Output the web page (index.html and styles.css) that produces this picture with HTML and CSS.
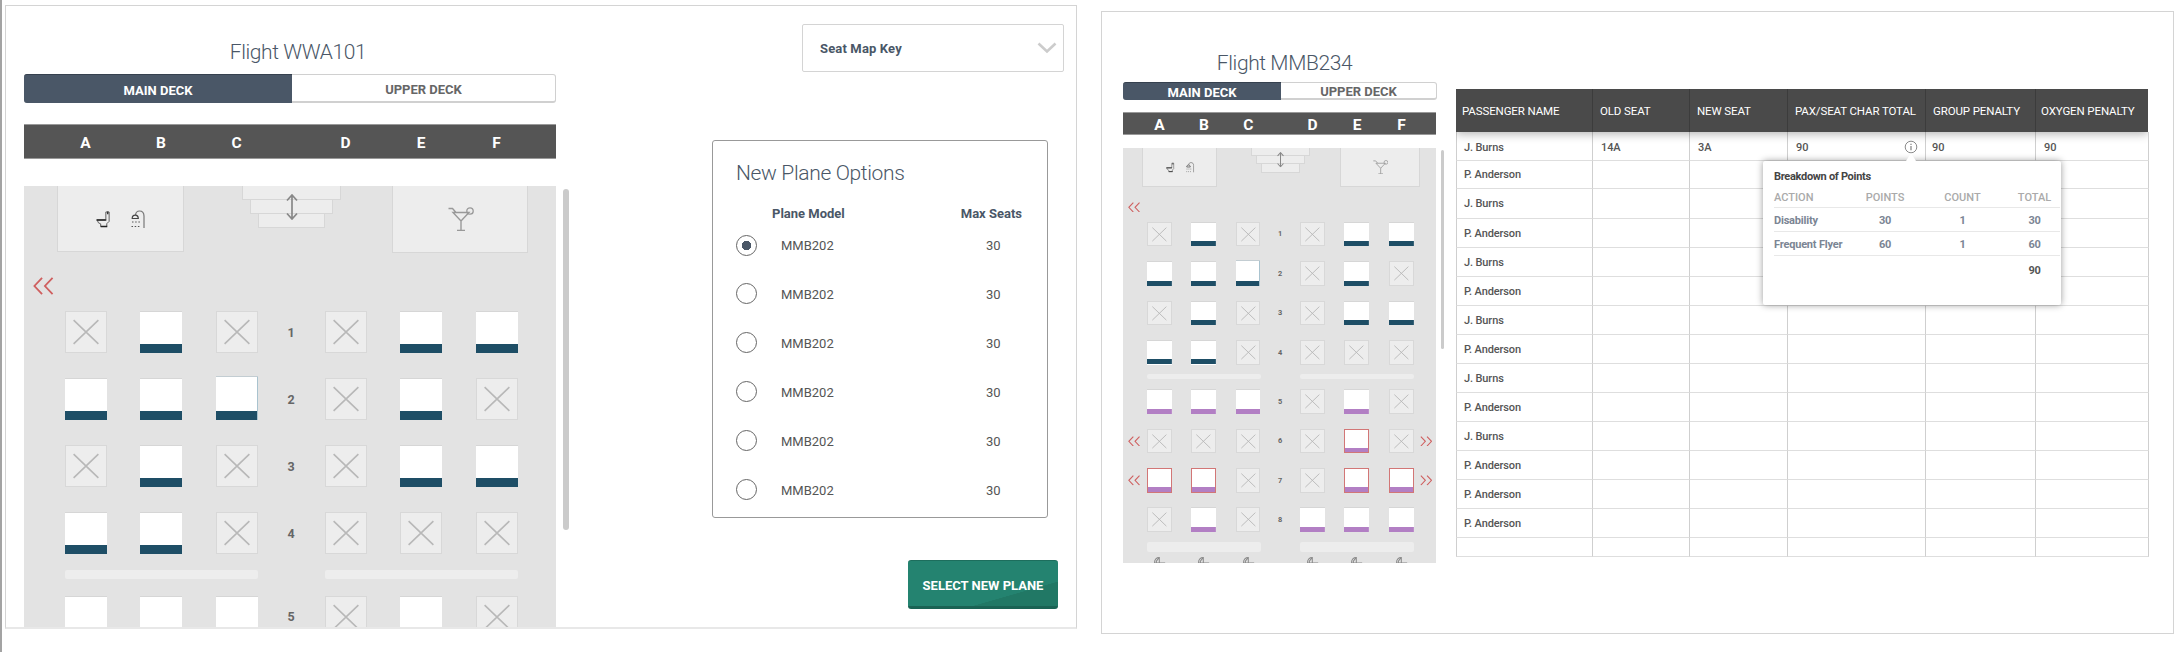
FILE: index.html
```
<!DOCTYPE html>
<html lang="en">
<head>
<meta charset="utf-8">
<title>Seat maps</title>
<link rel="stylesheet" href="styles.css">
</head>
<body>
<svg class="defs" aria-hidden="true">
  <symbol id="x" viewBox="0 0 42 42"><path d="M8 8.500 34 33.500M34 8.500 8 33.500" fill="none" stroke="#b8b8b8" stroke-width="1.700"/></symbol>
  <symbol id="toilet" viewBox="0 0 16 18"><path d="M1 10h9M1.500 10.500l1 2.500 2.500 1.200V17h6.500v-3l2.500-2.500V1.500h-3.500v8" fill="none" stroke="#555" stroke-width="1"/><path d="M.5 10H11M5 17h7" stroke="#222" stroke-width="1.500"/><path d="M12.500 1v3" stroke="#333" stroke-width="1.500"/></symbol>
  <symbol id="shower" viewBox="0 0 14 18"><path d="M13 18V6C13 2.500 11 1 8.500 1S4.800 2.500 4.500 5" fill="none" stroke="#777" stroke-width="1.200"/><path d="M1.200 8.500C1.200 4 7.300 4 7.300 8.500z" fill="none" stroke="#444" stroke-width="1.200"/><path d="M1 12h8M.500 16.500h9" stroke="#555" stroke-dasharray="1.500 1.700"/></symbol>
  <symbol id="drink" viewBox="0 0 26 24"><path d="M.500 1.500h4L8 5.500M5 5.500h16L13 14zM13 14v9.500M9 23.500h8" fill="none" stroke="#999" stroke-width="1.400"/><circle cx="22" cy="4" r="3.200" fill="none" stroke="#999" stroke-width="1.300"/></symbol>
  <symbol id="updown" viewBox="0 0 12 26"><path d="M6 1v24M1 6.500 6 1l5 5.500M1 19.500 6 25l5-5.500" fill="none" stroke="#888" stroke-width="1.700"/></symbol>
  <symbol id="left" viewBox="0 0 22 18"><path d="M9.500 .500 1.500 9l8 8.500M20.500 .500 12.500 9l8 8.500" fill="none" stroke="#cf5f5f" stroke-width="1.900"/></symbol>
  <symbol id="right" viewBox="0 0 22 18"><path d="M1.500 .500 9.500 9l-8 8.500M12.500 .500 20.500 9l-8 8.500" fill="none" stroke="#cf5f5f" stroke-width="1.900"/></symbol>
  <symbol id="recline" viewBox="0 0 20 18"><path d="M1 18V9C1 4 4 1 9 1v9H2M4 12V7l4-5M9 10h10M9 10v8M4 15h5" fill="none" stroke="#888" stroke-width="1.700"/></symbol>
</svg>

<main class="page">
  <section class="panel change">
    <div class="deck">
      <h1 class="flight">Flight WWA101</h1>
      <div class="tabs"><button class="tab on">MAIN DECK</button><button class="tab">UPPER DECK</button></div>
      <div class="letters"><b>A</b><b>B</b><b>C</b><b class="aisle"></b><b>D</b><b>E</b><b>F</b></div>
      <div class="scroll">
        <div class="map">
          <div class="galley">
            <div class="lav"><svg class="toilet"><use href="#toilet"/></svg><svg class="shower"><use href="#shower"/></svg></div>
            <div class="stairs"><i></i><i></i><i></i><svg class="updown"><use href="#updown"/></svg></div>
            <div class="bar"><svg class="drink"><use href="#drink"/></svg></div>
          </div>
          <div class="exit"><svg><use href="#left"/></svg></div>
          <div class="row"><span class="door"></span><svg class="seat no"><use href="#x"/></svg><i class="seat"></i><svg class="seat no"><use href="#x"/></svg><b class="num">1</b><svg class="seat no"><use href="#x"/></svg><i class="seat"></i><i class="seat"></i></div>
          <div class="row"><span class="door"></span><i class="seat"></i><i class="seat"></i><i class="seat raised"></i><b class="num">2</b><svg class="seat no"><use href="#x"/></svg><i class="seat"></i><svg class="seat no"><use href="#x"/></svg></div>
          <div class="row"><span class="door"></span><svg class="seat no"><use href="#x"/></svg><i class="seat"></i><svg class="seat no"><use href="#x"/></svg><b class="num">3</b><svg class="seat no"><use href="#x"/></svg><i class="seat"></i><i class="seat"></i></div>
          <div class="row"><span class="door"></span><i class="seat"></i><i class="seat"></i><svg class="seat no"><use href="#x"/></svg><b class="num">4</b><svg class="seat no"><use href="#x"/></svg><svg class="seat no"><use href="#x"/></svg><svg class="seat no"><use href="#x"/></svg></div>
          <div class="wall"><i></i><i></i></div>
          <div class="row"><span class="door"></span><i class="seat eco"></i><i class="seat eco"></i><i class="seat eco"></i><b class="num">5</b><svg class="seat no"><use href="#x"/></svg><i class="seat eco"></i><svg class="seat no"><use href="#x"/></svg></div>
        </div>
        <div class="thumb"></div>
      </div>
    </div>

    <div class="side">
      <div class="key"><span>Seat Map Key</span><svg width="20" height="12" viewBox="0 0 20 12"><path d="M1.500 1.500 10 9.500l8.500-8" fill="none" stroke="#ccc" stroke-width="2.600"/></svg></div>
      <div class="options">
        <h2>New Plane Options</h2>
        <div class="opthead"><b>Plane Model</b><b>Max Seats</b></div>
        <label class="opt"><i class="radio on"></i><span>MMB202</span><span>30</span></label>
        <label class="opt"><i class="radio"></i><span>MMB202</span><span>30</span></label>
        <label class="opt"><i class="radio"></i><span>MMB202</span><span>30</span></label>
        <label class="opt"><i class="radio"></i><span>MMB202</span><span>30</span></label>
        <label class="opt"><i class="radio"></i><span>MMB202</span><span>30</span></label>
        <label class="opt"><i class="radio"></i><span>MMB202</span><span>30</span></label>
      </div>
      <button class="select">SELECT NEW PLANE</button>
    </div>
  </section>

  <section class="panel report">
    <div class="deck small">
      <h1 class="flight">Flight MMB234</h1>
      <div class="tabs"><button class="tab on">MAIN DECK</button><button class="tab">UPPER DECK</button></div>
      <div class="letters"><b>A</b><b>B</b><b>C</b><b class="aisle"></b><b>D</b><b>E</b><b>F</b></div>
      <div class="scroll">
        <div class="map">
          <div class="galley">
            <div class="lav"><svg class="toilet"><use href="#toilet"/></svg><svg class="shower"><use href="#shower"/></svg></div>
            <div class="stairs"><i></i><i></i><i></i><svg class="updown"><use href="#updown"/></svg></div>
            <div class="bar"><svg class="drink"><use href="#drink"/></svg></div>
          </div>
          <div class="exit"><svg><use href="#left"/></svg></div>
          <div class="row"><span class="door"></span><svg class="seat no"><use href="#x"/></svg><i class="seat"></i><svg class="seat no"><use href="#x"/></svg><b class="num">1</b><svg class="seat no"><use href="#x"/></svg><i class="seat"></i><i class="seat"></i></div>
          <div class="row"><span class="door"></span><i class="seat"></i><i class="seat"></i><i class="seat raised"></i><b class="num">2</b><svg class="seat no"><use href="#x"/></svg><i class="seat"></i><svg class="seat no"><use href="#x"/></svg></div>
          <div class="row"><span class="door"></span><svg class="seat no"><use href="#x"/></svg><i class="seat"></i><svg class="seat no"><use href="#x"/></svg><b class="num">3</b><svg class="seat no"><use href="#x"/></svg><i class="seat"></i><i class="seat"></i></div>
          <div class="row"><span class="door"></span><i class="seat"></i><i class="seat"></i><svg class="seat no"><use href="#x"/></svg><b class="num">4</b><svg class="seat no"><use href="#x"/></svg><svg class="seat no"><use href="#x"/></svg><svg class="seat no"><use href="#x"/></svg></div>
          <div class="wall"><i></i><i></i></div>
          <div class="row"><span class="door"></span><i class="seat eco"></i><i class="seat eco"></i><i class="seat eco"></i><b class="num">5</b><svg class="seat no"><use href="#x"/></svg><i class="seat eco"></i><svg class="seat no"><use href="#x"/></svg></div>
          <div class="row"><span class="door"><svg><use href="#left"/></svg></span><svg class="seat no"><use href="#x"/></svg><svg class="seat no"><use href="#x"/></svg><svg class="seat no"><use href="#x"/></svg><b class="num">6</b><svg class="seat no"><use href="#x"/></svg><i class="seat eco red"></i><svg class="seat no"><use href="#x"/></svg><span class="door end"><svg><use href="#right"/></svg></span></div>
          <div class="row"><span class="door"><svg><use href="#left"/></svg></span><i class="seat eco red"></i><i class="seat eco red"></i><svg class="seat no"><use href="#x"/></svg><b class="num">7</b><svg class="seat no"><use href="#x"/></svg><i class="seat eco red"></i><i class="seat eco red"></i><span class="door end"><svg><use href="#right"/></svg></span></div>
          <div class="row"><span class="door"></span><svg class="seat no"><use href="#x"/></svg><i class="seat eco"></i><svg class="seat no"><use href="#x"/></svg><b class="num">8</b><i class="seat eco"></i><i class="seat eco"></i><i class="seat eco"></i></div>
          <div class="wall thick"><i></i><i></i></div>
          <div class="recliners"><svg><use href="#recline"/></svg><svg><use href="#recline"/></svg><svg><use href="#recline"/></svg><b class="num"></b><svg><use href="#recline"/></svg><svg><use href="#recline"/></svg><svg><use href="#recline"/></svg></div>
        </div>
        <div class="thumb"></div>
      </div>
    </div>

    <div class="results">
      <div class="tr head"><span>PASSENGER NAME</span><span>OLD SEAT</span><span>NEW SEAT</span><span>PAX/SEAT CHAR TOTAL</span><span>GROUP PENALTY</span><span>OXYGEN PENALTY</span></div>
      <div class="tr first"><span>J. Burns</span><span>14A</span><span>3A</span>
        <span class="total">90
          <span class="info"><svg width="14" height="14" viewBox="0 0 14 14"><circle cx="7" cy="7" r="5.800" fill="none" stroke="#8a8a8a"/><path d="M7 3.700v1.400M7 6v4.300" stroke="#8a8a8a" stroke-width="1.300"/></svg>
            <span class="pop">
              <b class="poptitle">Breakdown of Points</b>
              <span class="pr ph"><b>ACTION</b><b>POINTS</b><b>COUNT</b><b>TOTAL</b></span>
              <span class="pr"><b>Disability</b><b>30</b><b>1</b><b>30</b></span>
              <span class="pr"><b>Frequent Flyer</b><b>60</b><b>1</b><b>60</b></span>
              <span class="pr sum"><b></b><b></b><b></b><b>90</b></span>
            </span>
          </span>
        </span><span>90</span><span>90</span></div>
      <div class="tr"><span>P. Anderson</span><span></span><span></span><span></span><span></span><span></span></div>
      <div class="tr"><span>J. Burns</span><span></span><span></span><span></span><span></span><span></span></div>
      <div class="tr"><span>P. Anderson</span><span></span><span></span><span></span><span></span><span></span></div>
      <div class="tr"><span>J. Burns</span><span></span><span></span><span></span><span></span><span></span></div>
      <div class="tr"><span>P. Anderson</span><span></span><span></span><span></span><span></span><span></span></div>
      <div class="tr"><span>J. Burns</span><span></span><span></span><span></span><span></span><span></span></div>
      <div class="tr"><span>P. Anderson</span><span></span><span></span><span></span><span></span><span></span></div>
      <div class="tr"><span>J. Burns</span><span></span><span></span><span></span><span></span><span></span></div>
      <div class="tr"><span>P. Anderson</span><span></span><span></span><span></span><span></span><span></span></div>
      <div class="tr"><span>J. Burns</span><span></span><span></span><span></span><span></span><span></span></div>
      <div class="tr"><span>P. Anderson</span><span></span><span></span><span></span><span></span><span></span></div>
      <div class="tr"><span>P. Anderson</span><span></span><span></span><span></span><span></span><span></span></div>
      <div class="tr"><span>P. Anderson</span><span></span><span></span><span></span><span></span><span></span></div>
      <div class="tr"><span></span><span></span><span></span><span></span><span></span><span></span></div>
    </div>
  </section>
</main>
</body>
</html>
```
FILE: styles.css
```
* { box-sizing: border-box; }
body { margin: 0; background: #fff; font-family: Roboto, sans-serif; color: #555; }
h1, h2 { margin: 0; font-weight: 300; color: #4a5767; }
button { font-family: inherit; border: 0; padding: 0; margin: 0; background: none; }
.defs { position: absolute; width: 0; height: 0; }
.page { display: flex; height: 652px; border-left: 2px solid #a3a3a3; overflow: hidden; }
.panel { display: flex; border: 1px solid #d4d4d4; background: #fff; flex: none; }
.change { width: 1072px; height: 624px; margin: 5px 0 0 3px; border-bottom: 2px solid #e8e8e8; overflow: hidden; }
.report { width: 1073px; height: 623px; margin: 11px 0 0 24px; }

/* seat map, every length scales with --s */
.deck { --s: 1px; width: 532px; margin-left: 18px; flex: none; }
.flight { height: 68px; padding-top: 32px; text-align: center; font-size: 21px; letter-spacing: -.4px; line-height: 28px; padding-left: 16px; }
.tabs { display: flex; height: 29px; border: 1px solid #d0d0d0; border-width: 1px 1px 2px 0; border-radius: 3px; }
.tab { flex: 1; font-size: 13px; font-weight: 700; line-height: 1; color: #666; padding-top: 2px; }
.tab.on { flex: none; width: 268px; margin: -1px 0 -2px; color: #fff; background: #4a5767; border-radius: 3px 0 0 3px; border-top: 1px solid #36414f; }
.letters { display: flex; align-items: center; justify-content: center; height: 35px; margin-top: 21px; background: #555; border: 1px solid #999; border-width: 1px 0; color: #fff; font-size: 15.500px; padding-left: 2px; }
.letters b { width: calc(var(--s) * 75.500); text-align: center; padding-top: 2px; }
.letters .aisle { width: calc(var(--s) * 33.500); }
.scroll { display: flex; gap: 7px; margin-top: 27px; width: 560px; }
.map { width: calc(var(--s) * 531.500); height: 442px; background: #e3e3e3; overflow: hidden; flex: none; }
.thumb { width: 6px; height: 341px; margin-top: 3px; border-radius: 3px; background: #cbcbcb; }
.galley { display: flex; height: calc(var(--s) * 68); padding-left: calc(var(--s) * 33); align-items: flex-start; }
.lav, .bar { display: flex; border: 1px solid #d7d7d7; border-top: 0; background: #ededed; }
.lav { width: calc(var(--s) * 126.500); height: calc(var(--s) * 65.500); padding: calc(var(--s) * 24) 0 0 calc(var(--s) * 38); gap: calc(var(--s) * 20); }
.bar { width: calc(var(--s) * 136); height: calc(var(--s) * 66.500); margin-left: calc(var(--s) * 51); padding: calc(var(--s) * 21) 0 0 calc(var(--s) * 54.500); }
.toilet { width: calc(var(--s) * 15); height: calc(var(--s) * 18); }
.shower { width: calc(var(--s) * 14); height: calc(var(--s) * 18); }
.drink { width: calc(var(--s) * 26); height: calc(var(--s) * 24); }
.stairs { position: relative; display: flex; flex-direction: column; align-items: center; width: calc(var(--s) * 99); margin-left: calc(var(--s) * 58.500); }
.stairs i { width: 100%; height: calc(var(--s) * 14); background: #ededed; border: 1px solid #d7d7d7; border-top: 0; }
.stairs i:nth-child(2) { width: 84%; }
.stairs i:nth-child(3) { width: 67%; }
.updown { position: absolute; left: calc(var(--s) * 44); top: calc(var(--s) * 7.500); width: calc(var(--s) * 12); height: calc(var(--s) * 26); }
.exit { height: calc(var(--s) * 57); padding: calc(var(--s) * 23) 0 0 calc(var(--s) * 8.500); }
.exit svg, .door svg { display: block; width: calc(var(--s) * 21); height: calc(var(--s) * 18); }
.row { display: flex; align-items: center; height: calc(var(--s) * 42); margin-bottom: calc(var(--s) * 25); }
.door { width: calc(var(--s) * 40.500); padding-left: calc(var(--s) * 8.500); flex: none; }
.door.end { margin-left: calc(var(--s) * -31); }
.seat { width: calc(var(--s) * 42); height: calc(var(--s) * 42); margin-right: calc(var(--s) * 33.500); flex: none; background: linear-gradient(#1e4e66, #1e4e66) bottom / 100% calc(var(--s) * 9) no-repeat #fff; border-top: 1px solid #d6d6d6; }
.seat.eco { background-image: linear-gradient(#b27fc4, #b27fc4); }
.seat.no { background: #ededed; border: 1px solid #d8d8d8; }
.seat.red { box-shadow: inset 0 0 0 1px #d27676; border-top: 0; }
.seat.raised { height: calc(var(--s) * 44.500); margin-top: calc(var(--s) * -2.500); box-shadow: inset -1px 0 0 #a9c3cf; border-top-color: #c3cdd2; }
.num { display: flex; justify-content: center; width: 0; margin-right: calc(var(--s) * 33.500); font-size: calc(var(--s) * 12.500); color: #666; flex: none; }
.wall { display: flex; gap: calc(var(--s) * 67); margin: calc(var(--s) * -9) 0 calc(var(--s) * 17) calc(var(--s) * 40.500); }
.wall i { width: calc(var(--s) * 193); height: calc(var(--s) * 8.500); background: #ededed; border-radius: 2px; }
.wall.thick i { height: calc(var(--s) * 17.500); }
.wall.thick { margin-bottom: calc(var(--s) * 8); }
.recliners { display: flex; padding-left: calc(var(--s) * 52.500); }
.recliners svg { width: calc(var(--s) * 20); height: calc(var(--s) * 18); margin-right: calc(var(--s) * 55.500); flex: none; }

.small { --s: .589px; width: 314px; margin-left: 21px; }
.small .flight { height: 70px; padding: 37px 0 0 9px; line-height: 28px; }
.small .tabs { height: 18px; }
.small .tab { padding-top: 1px; }
.small .tab.on { width: 158px; }
.small .letters { height: 23px; margin-top: 12px; width: 313px; }
.small .scroll { margin-top: 13px; width: 330px; gap: 5px; }
.small .map { height: 415px; }
.small .thumb { width: 3px; height: 199px; margin-top: 2px; }

/* right half of the plane change panel */
.side { display: flex; flex-direction: column; width: 372px; margin-left: 139px; padding: 18px 0 0 17px; flex: none; }
.key { display: flex; align-items: center; justify-content: space-between; align-self: flex-end; width: 262px; height: 48px; margin-right: 3px; padding: 0 6px 0 17px; border: 1px solid #d4d4d4; border-radius: 2px; font-size: 13px; font-weight: 700; color: #4a5767; letter-spacing: .15px; }
.options { width: 336px; height: 378px; margin-top: 68px; padding: 18px 0 0 23px; border: 1px solid #999; border-radius: 3px; flex: none; }
.options h2 { font-size: 21px; letter-spacing: -.35px; line-height: 28px; }
.opthead { display: flex; justify-content: space-between; padding: 19px 25px 0 36px; height: 34px; font-size: 13px; line-height: 16px; color: #4a5767; }
.opt { display: flex; align-items: center; height: 49px; font-size: 13px; }
.opt:nth-of-type(1) { height: 48px; }
.radio { width: 21px; height: 21px; border: 1px solid #666; border-radius: 50%; flex: none; }
.radio.on { background: radial-gradient(circle, #4a5767 4.500px, transparent 5px); }
.opt span:nth-of-type(1) { width: 205px; margin-left: 24px; padding-top: 1px; }
.opt span:nth-of-type(2) { padding-top: 1px; }
.select { width: 150px; height: 49px; margin: 42px 0 0 196px; flex: none; border-radius: 3px; border-top: 1px solid #1d6e5d; border-bottom: 3px solid #1a6354; background: linear-gradient(164deg, #248370 72%, #217865 72.500%); color: #fff; font-size: 13px; font-weight: 700; padding-top: 3px; }

/* passenger results */
.results { margin: 77px 0 0 19px; width: 693px; height: 469px; }
.tr { display: grid; grid-template-columns: 137px 97px 98px 138px 110px 113px; height: 29px; font-size: 11px; letter-spacing: -.12px; font-weight: 500; }
.tr > span { display: flex; align-items: center; padding-left: 8px; border: 1px solid #dedede; border-width: 0 1px 1px 0; border-right-color: #cfcfcf; white-space: nowrap; }
.tr > span:first-child { border-left: 1px solid #cfcfcf; padding-left: 7px; }
.tr > span:nth-child(5) { padding-left: 6px; }
.tr.head { height: 43px; background: #4a4a4a; color: #fff; font-size: 11.500px; font-weight: 400; position: relative; box-shadow: 0 2px 9px rgba(0,0,0,.3); width: 692px; clip-path: inset(0 0 -14px 0); }
.tr.head > span { border: 0; border-right: 1px solid #3c3c3c; padding: 1px 0 0 7px; }
.tr.head > span:first-child { border-left: 0; padding-left: 6px; }
.tr.head > span:last-child { border-right: 0; padding-left: 5px; }
.tr.first > span { padding-top: 2px; }
.tr:nth-child(3) { height: 28px; }
.tr:nth-child(4) { height: 30px; }
.tr:last-child { height: 19px; }
.total { justify-content: space-between; padding-right: 7px; }
.info { position: relative; display: flex; }
.pop { position: absolute; top: 21px; left: -141px; width: 298px; height: 144px; padding: 8px 1px 0 11px; background: #fff; border-radius: 2px; box-shadow: 0 0 7px rgba(0,0,0,.4); z-index: 2; display: block; }
.pop::before { content: ""; position: absolute; top: -8px; left: 143px; border: 5px solid transparent; border-top: 0; border-bottom: 8px solid #fff; }
.poptitle { display: block; font-size: 11px; letter-spacing: -.3px; line-height: 16px; color: #444; }
.pr { display: grid; grid-template-columns: 73px 76px 79px 57px; height: 24px; align-items: center; text-align: center; border-bottom: 1px solid #e8e8e8; color: #7b8594; font-size: 11px; letter-spacing: -.2px; padding-top: 2px; }
.pr b:first-child { text-align: left; white-space: nowrap; }
.pr b:nth-child(4) { margin-left: 8px; }
.pr.ph { height: 23px; color: #aaa; letter-spacing: 0; }
.ph b { font-weight: 500; }
.pr.sum { border: 0; height: 28px; color: #555; padding-top: 0; }
```
